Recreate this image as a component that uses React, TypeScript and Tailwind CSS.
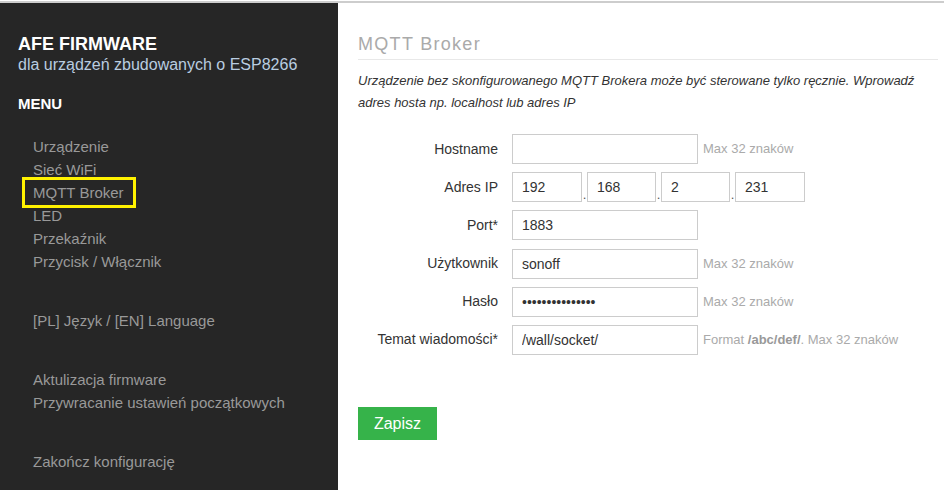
import React from "react";

const menu1 = ["Urządzenie", "Sieć WiFi", "MQTT Broker", "LED", "Przekaźnik", "Przycisk / Włącznik"];

function Row({ label, children, help }: { label: string; children: React.ReactNode; help?: React.ReactNode }) {
  return (
    <div className="flex items-center h-[30px] mb-[8.2px]">
      <label className="w-[154px] text-right pr-[14px] text-[14px] text-[#333]">{label}</label>
      {children}
      {help && <span className="ml-[5px] text-[13px] text-[#aaa]">{help}</span>}
    </div>
  );
}

function Input({ value, w = "w-[186px]", type = "text" }: { value: string; w?: string; type?: string }) {
  return (
    <input
      readOnly
      type={type}
      value={value}
      className={`${w} h-[30px] border border-[#ccc] bg-white px-[9px] text-[14px] text-[#333] outline-none`}
      style={{ fontFamily: "'Liberation Sans', Arial, sans-serif" }}
    />
  );
}

export default function App() {
  return (
    <div className="w-[944px] h-[490px] overflow-hidden bg-white flex flex-col" style={{ fontFamily: "'Liberation Sans', Arial, sans-serif" }}>
      <div className="h-[1px] bg-white" />
      <div className="h-[2px] bg-[#cdcdcd]" />
      <div className="flex flex-1">
        <aside className="w-[338px] bg-[#262626] pl-[18px] pt-[30px]">
          <div className="text-[18px] leading-[22px] font-bold text-white">AFE FIRMWARE</div>
          <div className="text-[16px] leading-[20px] text-[#b9cde0]">dla urządzeń zbudowanych o ESP8266</div>
          <div className="mt-[19px] text-[15px] leading-[20px] font-bold text-white">MENU</div>
          <ul className="mt-[21px] pl-[15px] text-[15px] leading-[23px] text-[#999]">
            {menu1.map((m) => (
              <li key={m} className="relative">
                {m}
                {m === "MQTT Broker" && (
                  <span className="absolute left-[-11px] top-[-4px] w-[114px] h-[31px] border-[3px] border-[#fff200]" />
                )}
              </li>
            ))}
          </ul>
          <ul className="mt-[36px] pl-[15px] text-[15px] leading-[23px] text-[#999]">
            <li>[PL] Język / [EN] Language</li>
          </ul>
          <ul className="mt-[36px] pl-[15px] text-[15px] leading-[23px] text-[#999]">
            <li>Aktulizacja firmware</li>
            <li>Przywracanie ustawień początkowych</li>
          </ul>
          <ul className="mt-[36px] pl-[15px] text-[15px] leading-[23px] text-[#999]">
            <li>Zakończ konfigurację</li>
          </ul>
        </aside>
        <main className="flex-1 pl-[20px] pr-[6px] pt-[29px]">
          <h2 className="text-[18px] leading-[24px] tracking-[1.3px] text-[#aaa] pb-[3px] border-b border-[#e8e8e8]">MQTT Broker</h2>
          <p className="mt-[10px] text-[13px] leading-[22px] italic text-[#333]">
            Urządzenie bez skonfigurowanego MQTT Brokera może być sterowane tylko ręcznie. Wprowadź
            <br />
            adres hosta np. localhost lub adres IP
          </p>
          <div className="mt-[20px]">
            <Row label="Hostname" help="Max 32 znaków">
              <Input value="" />
            </Row>
            <Row label="Adres IP">
              <div className="flex items-end">
                <Input value="192" w="w-[70px]" />
                <span className="w-[5px] text-center text-[13px] leading-[14px] text-[#555]">.</span>
                <Input value="168" w="w-[69px]" />
                <span className="w-[5px] text-center text-[13px] leading-[14px] text-[#555]">.</span>
                <Input value="2" w="w-[69px]" />
                <span className="w-[5px] text-center text-[13px] leading-[14px] text-[#555]">.</span>
                <Input value="231" w="w-[70px]" />
              </div>
            </Row>
            <Row label="Port*">
              <Input value="1883" />
            </Row>
            <Row label="Użytkownik" help="Max 32 znaków">
              <Input value="sonoff" />
            </Row>
            <Row label="Hasło" help="Max 32 znaków">
              <Input value="passwordpasswor" type="password" />
            </Row>
            <Row
              label="Temat wiadomości*"
              help={
                <>
                  Format <b className="text-[#999]">/abc/def/</b>. Max 32 znaków
                </>
              }
            >
              <Input value="/wall/socket/" />
            </Row>
          </div>
          <button className="mt-[44px] h-[33px] w-[79px] bg-[#36b34a] text-white text-[16px]">Zapisz</button>
        </main>
      </div>
    </div>
  );
}
